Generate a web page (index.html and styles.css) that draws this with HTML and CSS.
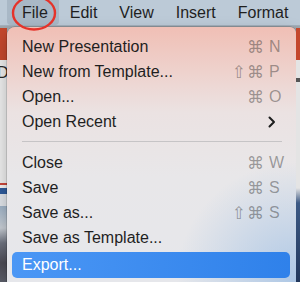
FILE: index.html
```html
<!DOCTYPE html>
<html lang="en">
<head>
  <meta charset="UTF-8" />
  <meta name="viewport" content="width=device-width, initial-scale=1.0"/>
  <title>File menu</title>
  <link rel="stylesheet" href="styles.css">
</head>
<body>
  <nav class="menubar" aria-label="Menu bar">
    <span class="menubar-item is-open">File</span>
    <span class="menubar-item">Edit</span>
    <span class="menubar-item">View</span>
    <span class="menubar-item">Insert</span>
    <span class="menubar-item">Format</span>
  </nav>

  <!-- hand-drawn marker round "File" -->
  <svg class="marker" width="60" height="40" viewBox="0 0 60 40" aria-hidden="true">
    <ellipse cx="34" cy="15" rx="21" ry="16.5" fill="none" stroke="#e5332a" stroke-width="2.4"/>
  </svg>

  <div class="workspace">
    <div class="backdrop backdrop-left"><span class="peek-letter">D</span></div>

    <ul class="menu" role="menu">
      <li class="menu-item" role="menuitem">
        <span>New Presentation</span>
        <span class="shortcut"><span class="mods">⌘</span><span class="key">N</span></span>
      </li>
      <li class="menu-item" role="menuitem">
        <span>New from Template...</span>
        <span class="shortcut"><span class="mods">⇧⌘</span><span class="key">P</span></span>
      </li>
      <li class="menu-item" role="menuitem">
        <span>Open...</span>
        <span class="shortcut"><span class="mods">⌘</span><span class="key">O</span></span>
      </li>
      <li class="menu-item" role="menuitem">
        <span>Open Recent</span>
        <svg class="chevron" width="8" height="12" viewBox="0 0 8 12" aria-hidden="true">
          <polyline points="1.5,1.5 6,6 1.5,10.5" fill="none" stroke="#1e1e1e" stroke-width="2" stroke-linecap="round" stroke-linejoin="round"/>
        </svg>
      </li>
      <li class="menu-separator" role="separator"></li>
      <li class="menu-item" role="menuitem">
        <span>Close</span>
        <span class="shortcut"><span class="mods">⌘</span><span class="key">W</span></span>
      </li>
      <li class="menu-item" role="menuitem">
        <span>Save</span>
        <span class="shortcut"><span class="mods">⌘</span><span class="key">S</span></span>
      </li>
      <li class="menu-item" role="menuitem">
        <span>Save as...</span>
        <span class="shortcut"><span class="mods">⇧⌘</span><span class="key">S</span></span>
      </li>
      <li class="menu-item" role="menuitem">
        <span>Save as Template...</span>
      </li>
      <li class="menu-item is-active" role="menuitem">
        <span>Export...</span>
      </li>
    </ul>

    <div class="backdrop backdrop-right"></div>
  </div>
</body>
</html>
```

FILE: styles.css
```css
:root {
  --color-bar: #bccad7;
  --color-bar-open: #a9b8c6;
  --color-text: #1f1f1f;
  --color-shortcut: rgba(40, 40, 40, 0.42);
  --color-active: #3b8bf0;
  --font-ui: 'Liberation Sans', Arial, sans-serif;
}

html, body {
  height: 100%;
}

body {
  margin: 0;
  font-family: var(--font-ui);
  font-size: 16px;
  color: var(--color-text);
  background: #e6e6e6;
  overflow: hidden;
  position: relative;
  display: flex;
  flex-direction: column;
}

.menubar {
  height: 25px;
  display: flex;
  align-items: stretch;
  padding-left: 7px;
  background: var(--color-bar);
  border-bottom: 1px solid #a3b0bc;
}

.menubar-item {
  display: flex;
  align-items: center;
  padding: 0 11px;
}

.menubar-item.is-open {
  padding-left: 15px;
  background: var(--color-bar-open);
  border-radius: 0 0 4px 4px;
}

.marker {
  position: absolute;
  left: 0;
  top: -2px;
}

.workspace {
  flex: 1;
  display: grid;
  grid-template-columns: 7px 1fr 4px;
  background: #9fa7ae;
}

.backdrop {
  margin-top: 2px;
}

.backdrop-left {
  background: linear-gradient(180deg,
    #c4472c 0, #c4472c 32px,
    #ececec 32px, #ececec 155px,
    #c9473b 155px, #c9473b 157px,
    #f3f3f3 157px, #f3f3f3 160px,
    #2e5b9b 160px, #2e5b9b 166px,
    #dfe3e8 166px, #dfe3e8 178px,
    #9eb2c6 178px, #c7cdd4 200px,
    #6e7380 215px, #4d4c55 235px, #5b5e69 100%);
  overflow: hidden;
}

.peek-letter {
  display: block;
  margin: 36px 0 0 -3px;
  font-size: 16px;
  color: #2a2a2a;
}

.backdrop-right {
  background: linear-gradient(180deg,
    #c4472c 0, #c4472c 32px,
    #e4e4e4 32px, #e4e4e4 50px,
    #555 50px, #555 54px,
    #e4e4e4 54px, #e4e4e4 160px,
    #3d5a85 175px, #22385c 100%);
}

.menu {
  list-style: none;
  margin: 1px 0 0;
  padding: 7px 0 0;
  border-radius: 8px 6px 0 0;
  background:
    radial-gradient(ellipse 120px 120px at 100% 100%, rgba(160, 192, 228, 0.8), rgba(160, 192, 228, 0) 100%),
    linear-gradient(180deg, #f0bfb5 0, #eed2cd 45px, #ebe2e2 85px, #e8e7e9 150px, #e6e7eb 100%);
  box-shadow: 0 0 0 0.5px rgba(0, 0, 0, 0.25), 0 6px 16px rgba(0, 0, 0, 0.25);
}

.menu-item {
  height: 25px;
  margin: 0 6px 0 5px;
  padding: 0 6px 0 10px;
  display: flex;
  align-items: center;
  justify-content: space-between;
  border-radius: 5px;
  white-space: nowrap;
}

.menu-item.is-active {
  height: 26px;
  margin-top: 2px;
  color: #fff;
  background: linear-gradient(90deg, #4b97f5, #2f81ea);
}

.shortcut {
  display: flex;
  align-items: center;
  color: var(--color-shortcut);
  font-family: 'DejaVu Sans', var(--font-ui);
  font-size: 17px;
}

.mods {
  letter-spacing: 1px;
}

.key {
  width: 15px;
  margin-left: 4px;
  font-family: var(--font-ui);
  font-size: 16px;
}

.chevron {
  margin-right: 8px;
}

.menu-separator {
  height: 1px;
  margin: 7px 14px 8px 15px;
  background: #c6c4c6;
}
```
